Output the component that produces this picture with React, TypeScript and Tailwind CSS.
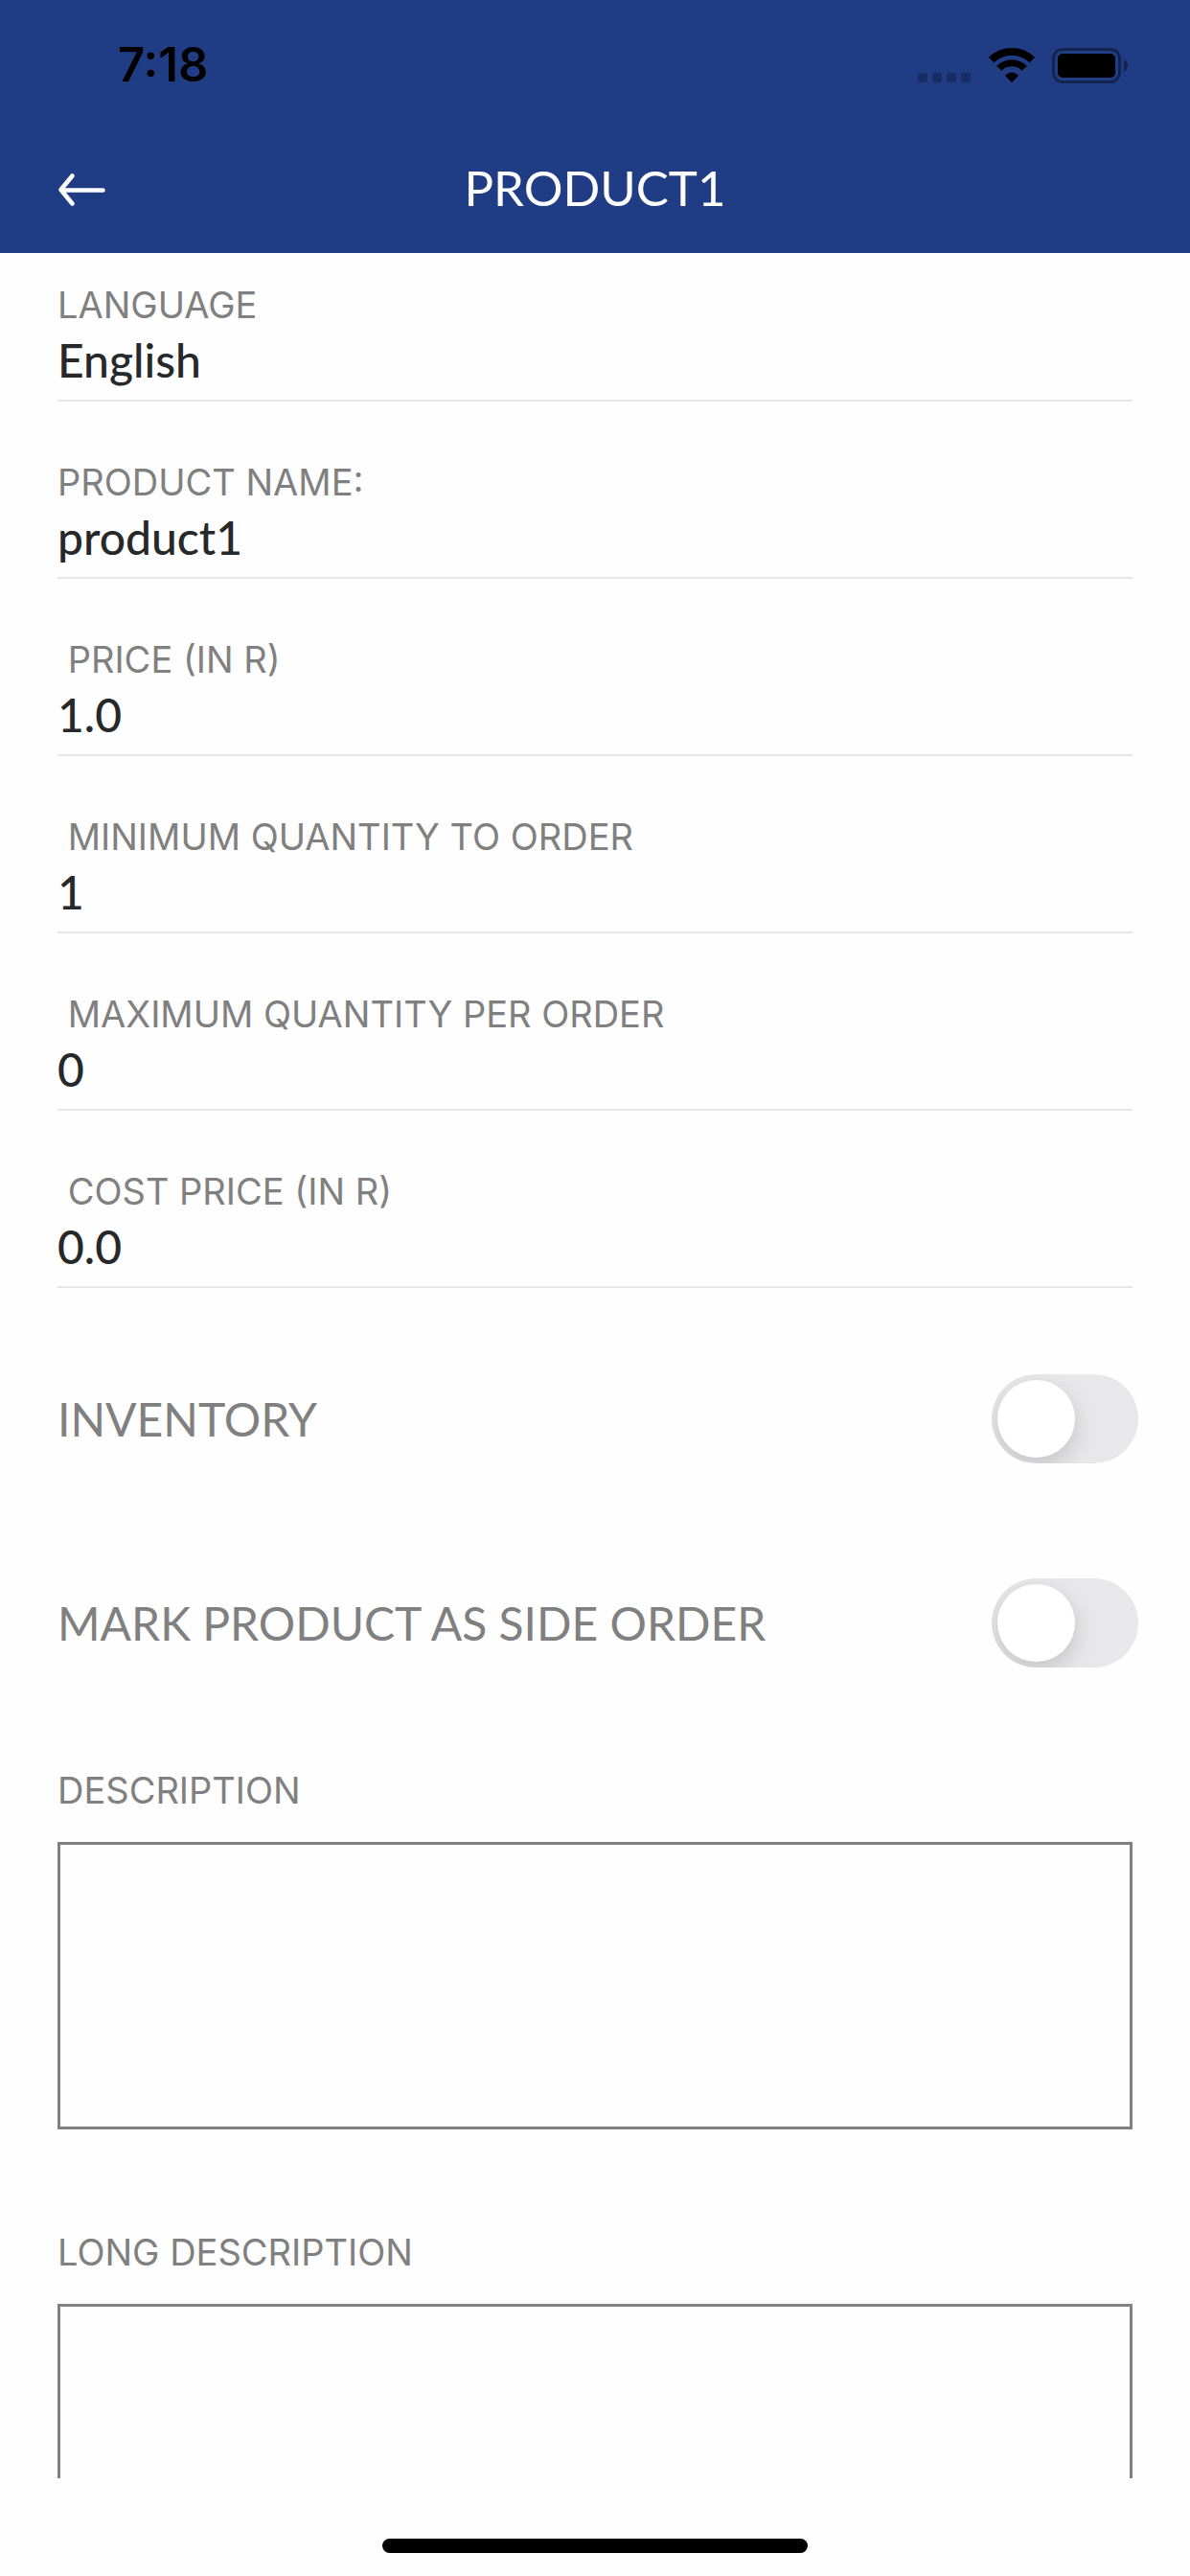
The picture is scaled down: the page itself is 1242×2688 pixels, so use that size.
import { useState } from 'react';

interface Product {
  language: string;
  name: string;
  price: string;
  minQuantity: string;
  maxQuantity: string;
  costPrice: string;
}

const fieldClass =
  "block w-full h-[68px] p-0 bg-transparent appearance-none outline-none font-['Lato',sans-serif] font-medium text-[48px] leading-[68px] text-[#262829]";

function StatusBar() {
  return (
    <div className="flex items-center justify-between h-[136px] pl-[123px] pr-16 text-black">
      <span className="text-[49px] leading-[58px] font-semibold">7:18</span>
      <div className="flex items-center gap-[18px]">
        <svg width="56" height="37" viewBox="0 0 56 37" fill="currentColor" fillOpacity="0.25">
          <rect x="0" y="26" width="10" height="10" rx="3" />
          <rect x="15" y="26" width="10" height="10" rx="3" />
          <rect x="30" y="26" width="10" height="10" rx="3" />
          <rect x="45" y="26" width="10" height="10" rx="3" />
        </svg>
        <svg width="48" height="37" viewBox="0 0 48 37" fill="none" stroke="currentColor">
          <path d="M2.6 12.6A30.5 30.5 0 0 1 45.4 12.6" strokeWidth="7.6" />
          <path d="M10.8 21.4A18.5 18.5 0 0 1 37.2 21.4" strokeWidth="7" />
          <path d="M24 36L17.3 29.3Q17.3 28.6 18 28Q24 23.2 30 28Q30.7 28.6 30.7 29.3Z" fill="currentColor" stroke="none" />
        </svg>
        <svg width="80" height="37" viewBox="0 0 80 37" fill="currentColor">
          <rect x="1.5" y="1.5" width="69" height="34" rx="9.5" fill="none" stroke="currentColor" strokeWidth="3" strokeOpacity="0.4" />
          <rect x="6" y="6" width="60" height="25" rx="5" />
          <path d="M75 12Q79 14 79 18.5Q79 23 75 25Z" fillOpacity="0.4" />
        </svg>
      </div>
    </div>
  );
}

function Header({ title }: { title: string }) {
  return (
    <header className="shrink-0 bg-[#203c84]">
      <StatusBar />
      <div className="grid grid-cols-[1fr_auto_1fr] items-center h-32 px-[60px] pb-1">
        <button type="button" aria-label="Back" className="justify-self-start text-white">
          <svg
            width="51"
            height="36"
            viewBox="0 0 51 36"
            fill="none"
            stroke="currentColor"
            strokeWidth="4.6"
            strokeLinecap="round"
            strokeLinejoin="round"
          >
            <path d="M15.5 3.5L3.5 18L15.5 32.5M4 18.5H47.5" />
          </svg>
        </button>
        <h1 className="pb-1 font-['Lato',sans-serif] text-[51px] leading-[62px] text-white">{title}</h1>
      </div>
    </header>
  );
}

interface LabelProps {
  id: string;
  label: string;
}

function FieldLabel({ id, label }: LabelProps) {
  return (
    <label htmlFor={id} className="block whitespace-pre text-[38px] leading-[48px] text-[#808080]">
      {label}
    </label>
  );
}

interface TextFieldProps extends LabelProps {
  value: string;
  onChange: (value: string) => void;
}

function TextField({ id, label, value, onChange }: TextFieldProps) {
  return (
    <div className="pt-[30px] pb-[7px] border-b-2 border-[#e6e6e6]">
      <FieldLabel id={id} label={label} />
      <input id={id} type="text" value={value} onChange={(e) => onChange(e.target.value)} className={fieldClass} />
    </div>
  );
}

function Toggle({ id, label }: LabelProps) {
  return (
    <div className="flex items-center justify-between -mr-1.5">
      <label htmlFor={id} className="font-['Lato',sans-serif] text-[48px] leading-[58px] text-[#808080]">
        {label}
      </label>
      <input
        id={id}
        type="checkbox"
        role="switch"
        className="flex shrink-0 appearance-none w-[153px] h-[93px] p-1.5 overflow-hidden rounded-full bg-[#e8e8ea] before:size-[81px] before:rounded-full before:bg-white before:shadow-[0_9px_24px_rgba(0,0,0,0.16)] checked:justify-end checked:bg-[#34c759]"
      />
    </div>
  );
}

function TextArea({ id, label }: LabelProps) {
  return (
    <div className="flex flex-col gap-[30px]">
      <FieldLabel id={id} label={label} />
      <textarea
        id={id}
        className="block w-full h-[300px] p-4 resize-none outline-none border-3 border-[#808080] font-['Lato',sans-serif] text-[48px] leading-[58px] text-[#262829]"
      />
    </div>
  );
}

export default function App() {
  const [product, setProduct] = useState<Product>({
    language: 'English',
    name: 'product1',
    price: '1.0',
    minQuantity: '1',
    maxQuantity: '0',
    costPrice: '0.0',
  });

  const update = (key: keyof Product) => (value: string) => setProduct({ ...product, [key]: value });

  return (
    <div className="flex flex-col h-screen bg-[#fefefe] font-['Inter',sans-serif]">
      <Header title="PRODUCT1" />
      <main className="flex-1 min-h-0 overflow-hidden px-[60px]">
        <div className="flex flex-col gap-[30px]">
          <div className="pt-[30px] pb-[7px] border-b-2 border-[#e6e6e6]">
            <FieldLabel id="language" label="LANGUAGE" />
            <select
              id="language"
              value={product.language}
              onChange={(e) => update('language')(e.target.value)}
              className={fieldClass}
            >
              <option>English</option>
            </select>
          </div>
          <TextField id="name" label="PRODUCT NAME:" value={product.name} onChange={update('name')} />
          <TextField id="price" label=" PRICE (IN R)" value={product.price} onChange={update('price')} />
          <TextField id="min" label=" MINIMUM QUANTITY TO ORDER" value={product.minQuantity} onChange={update('minQuantity')} />
          <TextField id="max" label=" MAXIMUM QUANTITY PER ORDER" value={product.maxQuantity} onChange={update('maxQuantity')} />
          <TextField id="cost" label=" COST PRICE (IN R)" value={product.costPrice} onChange={update('costPrice')} />
        </div>
        <div className="flex flex-col gap-[120px] pt-[90px]">
          <Toggle id="inventory" label="INVENTORY" />
          <Toggle id="side-order" label="MARK PRODUCT AS SIDE ORDER" />
        </div>
        <div className="flex flex-col gap-[104px] pt-[104px]">
          <TextArea id="description" label="DESCRIPTION" />
          <TextArea id="long-description" label="LONG DESCRIPTION" />
        </div>
      </main>
      <footer className="flex shrink-0 items-end justify-center h-[102px] pb-6">
        <div className="w-[444px] h-[15px] rounded-full bg-black" />
      </footer>
    </div>
  );
}
